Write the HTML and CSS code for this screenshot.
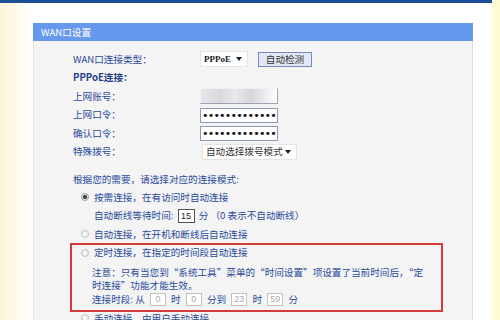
FILE: index.html
```html
<!DOCTYPE html>
<html lang="zh-CN">
<head>
    <meta charset="UTF-8">
    <meta name="viewport" content="width=device-width, initial-scale=1.0">
    <title>WAN口设置</title>
    <link rel="stylesheet" href="styles.css">
</head>
<body>
    <div class="topbar"></div>
    <div class="panel">
        <div class="panel-head">WAN口设置</div>
        <div class="panel-body">
            <div class="form-grid">
                <span class="label">WAN口连接类型：</span>
                <div class="field">
                    <div class="select select-type">PPPoE<span class="arrow"></span></div>
                    <button class="btn" type="button">自动检测</button>
                </div>

                <span class="label bold">PPPoE连接：</span>
                <div class="field"></div>

                <span class="label">上网账号：</span>
                <div class="field"><div class="text-input account"></div></div>

                <span class="label">上网口令：</span>
                <div class="field"><input class="text-input" type="password" value="xxxxxxxxxxxxx"></div>

                <span class="label">确认口令：</span>
                <div class="field"><input class="text-input" type="password" value="xxxxxxxxxxxxx"></div>

                <span class="label">特殊拨号：</span>
                <div class="field">
                    <div class="select select-dial">自动选择拨号模式<span class="arrow"></span></div>
                </div>
            </div>

            <p class="hint">根据您的需要，请选择对应的连接模式:</p>

            <label class="mode"><input type="radio" name="mode" checked>按需连接，在有访问时自动连接</label>
            <div class="sub">自动断线等待时间: <span class="num num-dark">15</span> 分 （0 表示不自动断线）</div>
            <label class="mode"><input type="radio" name="mode">自动连接，在开机和断线后自动连接</label>

            <div class="highlight">
                <label class="mode mode-tight"><input type="radio" name="mode">定时连接，在指定的时间段自动连接</label>
                <p class="note">注意：只有当您到“系统工具”菜单的“时间设置”项设置了当前时间后，“定<br>时连接”功能才能生效。</p>
                <div class="sub sub-time">连接时段: 从 <span class="num">0</span> 时 <span class="num">0</span> 分到 <span class="num">23</span> 时 <span class="num">59</span> 分</div>
            </div>

            <label class="mode mode-last"><input type="radio" name="mode">手动连接，由用户手动连接</label>
        </div>
    </div>
</body>
</html>
```

FILE: styles.css
```css
* {
    box-sizing: border-box;
}

body {
    margin: 0;
    height: 320px;
    overflow: hidden;
    font-family: "Noto Sans CJK SC", sans-serif;
    font-size: 9.6px;
    line-height: 1;
    color: #2a4a9c;
    background: linear-gradient(to right, #fbf4dc 0, #fdf9ea 16px, #fff 30px, #fff 490px, #fdfad2 494px);
}

.topbar {
    width: 492px;
    height: 3px;
    background: #1d4e98;
}

.panel {
    width: 440px;
    height: 320px;
    margin: 20px 0 0 33px;
    background: #f4f4f4;
    border: 1px solid #dedede;
    border-top: none;
    border-left-color: #efe0d2;
}

.panel-head {
    height: 18px;
    margin: 0 -1px;
    padding-left: 8px;
    line-height: 18px;
    background: #6699ee;
    color: #fff;
    font-size: 9.6px;
}

.panel-body {
    padding: 9px 0 0 39px;
}

.form-grid {
    display: grid;
    grid-template-columns: 127px 1fr;
    grid-auto-rows: 18.6px;
    align-items: center;
}

.label {
    white-space: nowrap;
}

.label.bold {
    font-weight: bold;
    color: #24408a;
}

.field {
    display: flex;
    align-items: center;
}

.select {
    display: flex;
    align-items: center;
    justify-content: space-between;
    height: 16px;
    background: #fff;
    border: 1px solid #e4e4e4;
    color: #222;
    white-space: nowrap;
}

.select-type {
    width: 48px;
    padding: 0 5px 0 3px;
    font-family: "Liberation Serif", serif;
    font-weight: bold;
    font-size: 9px;
}

.select-dial {
    width: 95px;
    margin-left: 2px;
    padding: 0 5px 0 3px;
    color: #333;
}

.arrow {
    width: 0;
    height: 0;
    border-top: 4px solid #222;
    border-left: 3px solid transparent;
    border-right: 3px solid transparent;
}

.btn {
    width: 54px;
    height: 15px;
    margin-left: 10px;
    padding: 0;
    background: #e2e7f6;
    border: 1px solid #7887bf;
    color: #333;
    font-family: "Noto Sans CJK SC", sans-serif;
    font-size: 9.6px;
    line-height: 13px;
}

.text-input {
    width: 78px;
    height: 15px;
    margin: 0;
    padding: 0 1px;
    background: #fff;
    border: 1px solid #8d9cb6;
    font-family: "DejaVu Sans", sans-serif;
    font-size: 11px;
    letter-spacing: -0.8px;
    color: #111;
}

.account {
    height: 16px;
    border-color: #f0f0f0 #9aa4b4 #9aa4b4 #f0f0f0;
    background: linear-gradient(to right, #e6e6ea 0, #d8d8de 25%, #e8e8ec 45%, #d6d6dc 65%, #ececef 85%, #fff 100%);
}

.hint {
    margin: 8.5px 0 0;
    line-height: 18px;
}

.mode {
    display: flex;
    align-items: center;
    height: 18.5px;
    padding-left: 8px;
}

.mode input {
    appearance: none;
    width: 8px;
    height: 8px;
    margin: 0 5px 0 0;
    border: 1px solid #bcc3c8;
    border-radius: 50%;
    background: radial-gradient(circle, #fff 0, #e3e6e8 100%);
}

.mode input:checked {
    border-color: #9aa2a6;
    background: radial-gradient(circle, #3d4a3f 0, #3d4a3f 1.6px, #dfe4e0 2.4px);
}

.sub {
    display: flex;
    align-items: center;
    height: 18.5px;
    padding-left: 21px;
    white-space: pre;
}

.num {
    display: inline-block;
    width: 16px;
    height: 13px;
    margin: 0 2px;
    background: #fff;
    border: 1px solid #c2c2c2;
    color: #aaa;
    font-family: "Liberation Sans", sans-serif;
    font-size: 9px;
    line-height: 11px;
    text-align: center;
}

.num-dark {
    width: 17px;
    height: 14px;
    border-color: #555;
    color: #222;
    line-height: 12px;
}

.highlight {
    width: 373px;
    margin: -1px 0 0 -3px;
    padding: 0 0 2.5px 1px;
    border: 2px solid #d43b3b;
}

.mode-tight {
    height: 17px;
}

.note {
    margin: 4px 0 0;
    padding-left: 19px;
    line-height: 13px;
}

.sub-time {
    height: 16px;
    padding-left: 19px;
}

.sub-time .num {
    margin: 0 3px;
}

.mode-last {
    margin-top: -3px;
}
```
